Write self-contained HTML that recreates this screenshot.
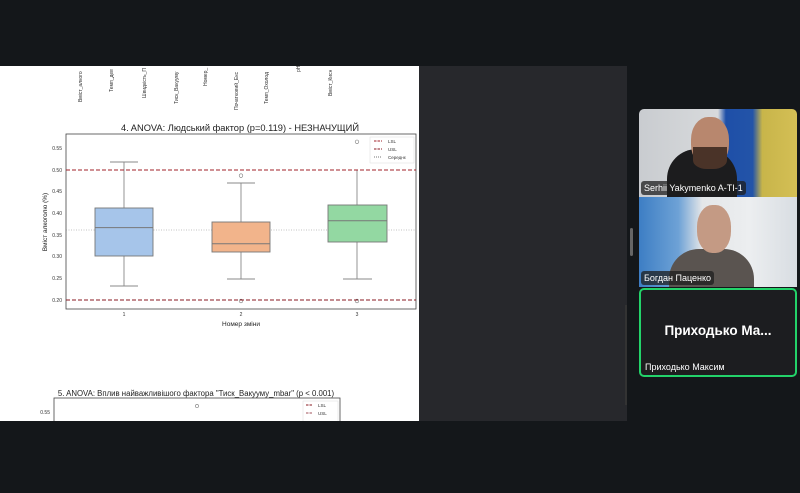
<!DOCTYPE html>
<html><head><meta charset="utf-8"><style>
*{margin:0;padding:0;box-sizing:border-box}
body{width:800px;height:493px;background:#14171a;position:relative;overflow:hidden;font-family:"Liberation Sans","DejaVu Sans",sans-serif}
.abs{position:absolute}
.tile{position:absolute;left:639px;width:158px;overflow:hidden}
.name{position:absolute;left:2px;bottom:2px;background:rgba(30,30,30,.75);color:#fff;font-size:9px;padding:2px 3px;border-radius:3px;white-space:nowrap}
</style></head><body>
<div class="abs" style="left:0;top:66px;width:419px;height:355px;background:#fff;overflow:hidden">
<svg width="419" height="355" viewBox="0 66 419 355" font-family="Liberation Sans, DejaVu Sans, sans-serif">
<g font-size="5" fill="#333">
<text transform="translate(82,102) rotate(-90)">Вміст_алкого</text>
<text transform="translate(113,92) rotate(-90)">Темп_дев</text>
<text transform="translate(146,98) rotate(-90)">Швидкість_П</text>
<text transform="translate(178,104) rotate(-90)">Тиск_Вакууму</text>
<text transform="translate(207,86) rotate(-90)">Номер_</text>
<text transform="translate(238,110) rotate(-90)">Початковий_Екс</text>
<text transform="translate(268,104) rotate(-90)">Темп_Охолод</text>
<text transform="translate(300,72) rotate(-90)">pH</text>
<text transform="translate(332,96) rotate(-90)">Вміст_Кисн</text>
</g>
<text x="240" y="131" font-size="9.3" text-anchor="middle" fill="#222">4. ANOVA: Людський фактор (p=0.119) - НЕЗНАЧУЩИЙ</text>
<rect x="66" y="134" width="350" height="175" fill="none" stroke="#444" stroke-width="0.8"/>
<g font-size="5" fill="#333" text-anchor="end">
<text x="62" y="150">0.55</text><text x="62" y="172">0.50</text><text x="62" y="193">0.45</text><text x="62" y="215">0.40</text><text x="62" y="237">0.35</text><text x="62" y="258">0.30</text><text x="62" y="280">0.25</text><text x="62" y="302">0.20</text>
</g>
<text transform="translate(47,222) rotate(-90)" font-size="6.5" text-anchor="middle" fill="#222">Вміст алкоголю (%)</text>
<g font-size="5" fill="#333" text-anchor="middle"><text x="124" y="316">1</text><text x="241" y="316">2</text><text x="357" y="316">3</text></g>
<text x="241" y="326" font-size="6.5" text-anchor="middle" fill="#222">Номер зміни</text>
<line x1="66" y1="230" x2="416" y2="230" stroke="#888" stroke-width="0.6" stroke-dasharray="1,1.5"/>
<g stroke="#888" stroke-width="0.9">
<line x1="124" y1="162" x2="124" y2="208"/><line x1="124" y1="256" x2="124" y2="286"/><line x1="110" y1="162" x2="138" y2="162"/><line x1="110" y1="286" x2="138" y2="286"/>
<line x1="241" y1="183" x2="241" y2="222"/><line x1="241" y1="252" x2="241" y2="279"/><line x1="227" y1="183" x2="255" y2="183"/><line x1="227" y1="279" x2="255" y2="279"/>
<line x1="357" y1="170" x2="357" y2="205"/><line x1="357" y1="242" x2="357" y2="279"/><line x1="343" y1="279" x2="372" y2="279"/>
</g>
<rect x="95" y="208" width="58" height="48" fill="#a6c5ea" stroke="#777" stroke-width="0.9"/><line x1="95" y1="227.6" x2="153" y2="227.6" stroke="#777"/>
<rect x="212" y="222" width="58" height="30" fill="#f2b48b" stroke="#777" stroke-width="0.9"/><line x1="212" y1="243.7" x2="270" y2="243.7" stroke="#777"/>
<rect x="328" y="205" width="59" height="37" fill="#93d8a2" stroke="#777" stroke-width="0.9"/><line x1="328" y1="220.7" x2="387" y2="220.7" stroke="#777"/>
<g fill="none" stroke="#777" stroke-width="0.6"><circle cx="241" cy="175.6" r="1.8"/><circle cx="241" cy="301" r="1.8"/><circle cx="357" cy="141.8" r="1.8"/><circle cx="357" cy="301" r="1.8"/></g>
<line x1="66" y1="170" x2="416" y2="170" stroke="#a2202a" stroke-width="1.1" stroke-dasharray="4,2"/>
<line x1="66" y1="300" x2="416" y2="300" stroke="#8a1a22" stroke-width="1.1" stroke-dasharray="4,2"/>
<rect x="370" y="137" width="44" height="26" fill="#fff" stroke="#ddd" stroke-width="0.5"/>
<line x1="374" y1="141" x2="382" y2="141" stroke="#a2202a" stroke-dasharray="2.5,1"/><text x="388" y="143" font-size="4.5" fill="#333">LSL</text>
<line x1="374" y1="149" x2="382" y2="149" stroke="#8a1a22" stroke-dasharray="2.5,1"/><text x="388" y="151" font-size="4.5" fill="#333">USL</text>
<line x1="374" y1="157" x2="382" y2="157" stroke="#777" stroke-dasharray="1,1"/><text x="388" y="159" font-size="4.5" fill="#333">Середнє</text>
<text x="196" y="396" font-size="7.8" text-anchor="middle" fill="#222">5. ANOVA: Вплив найважливішого фактора "Тиск_Вакууму_mbar" (p &lt; 0.001)</text>
<rect x="54" y="398" width="286" height="30" fill="none" stroke="#444" stroke-width="0.8"/>
<text x="50" y="414" font-size="5" fill="#333" text-anchor="end">0.55</text>
<circle cx="197" cy="406" r="1.6" fill="none" stroke="#777" stroke-width="0.6"/>
<rect x="303" y="401" width="35" height="25" fill="#fff" stroke="#ddd" stroke-width="0.5"/>
<line x1="306" y1="405" x2="313" y2="405" stroke="#8a1a22" stroke-dasharray="2.5,1"/><text x="318" y="407" font-size="4.5" fill="#333">LSL</text>
<line x1="306" y1="413" x2="313" y2="413" stroke="#a2505a" stroke-dasharray="2.5,1"/><text x="318" y="415" font-size="4.5" fill="#333">USL</text>
</svg></div>
<div class="abs" style="left:419px;top:66px;width:208px;height:355px;background:#27282c"></div>
<div class="abs" style="left:630px;top:228px;width:3px;height:28px;background:#666;border-radius:2px"></div>
<div class="abs" style="left:625px;top:305px;width:2px;height:100px;background:#333"></div>
<div class="tile" style="top:109px;height:88px;border-radius:5px 5px 0 0;background:linear-gradient(90deg,#c9ccd0 0%,#d8dadc 50%,#1e4fa8 55%,#2354a8 72%,#c8b54a 78%,#d4bf55 100%)">
<div class="abs" style="left:28px;top:40px;width:70px;height:50px;background:#1c1c1e;border-radius:30px 30px 0 0"></div>
<div class="abs" style="left:52px;top:8px;width:38px;height:50px;background:#b8876e;border-radius:45%"></div>
<div class="abs" style="left:54px;top:38px;width:34px;height:22px;background:#4a3328;border-radius:0 0 40% 40%"></div>
<div class="name">Serhii Yakymenko A-TI-1</div></div>
<div class="tile" style="top:197px;height:90px;background:linear-gradient(90deg,#3d7ec4 0%,#6ea2d6 25%,#e4e6e8 40%,#eceef0 70%,#d8dde2 100%)">
<div class="abs" style="left:30px;top:52px;width:85px;height:45px;background:#5a5450;border-radius:30px 30px 0 0"></div>
<div class="abs" style="left:58px;top:8px;width:34px;height:48px;background:#c49a84;border-radius:45%"></div>
<div class="name" style="left:2px">Богдан Паценко</div></div>
<div class="tile" style="top:288px;height:89px;border-radius:5px;background:#1c1d20;border:2px solid #23d36a">
<div class="abs" style="left:0;top:33px;width:100%;text-align:center;color:#fff;font-weight:bold;font-size:13.5px">Приходько Ма...</div>
<div class="name" style="left:1px;bottom:1px">Приходько Максим</div></div>
</body></html>
